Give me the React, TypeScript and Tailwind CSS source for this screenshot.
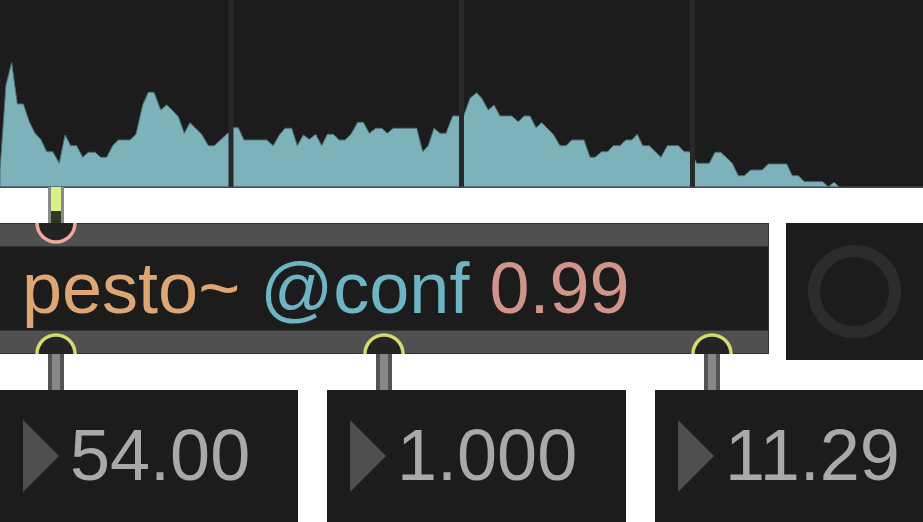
import React from "react";

const PTS: [number, number][] = [
  [0, 170], [6, 85], [11.7, 62.7], [17.3, 104], [23.3, 104], [29.3, 121.7], [35, 133.3], [40.7, 139.3],
  [46.7, 151.7], [52.7, 151.7], [59.3, 163.3], [65, 135], [70.7, 145.7], [76.7, 145.7], [82.7, 157.3],
  [88.3, 152.3], [95, 152.3], [100.7, 157.3], [106.7, 157.3], [112.7, 145.7], [118.3, 140], [130, 140],
  [136, 134.3], [142.7, 105], [148.3, 92.3], [154, 92.3], [160.7, 110], [166.7, 105], [172.7, 110.7],
  [178.3, 116.7], [184.3, 133.3], [190, 122.7], [201.7, 134.3], [208.3, 145.7], [214.3, 145.7],
  [227.7, 133.3], [233.3, 127.7], [238.3, 127.7], [244, 140], [266.7, 140], [273.3, 145.7], [279.3, 135],
  [285, 128.3], [291.7, 128.3], [297.3, 145.7], [303.3, 135], [309.3, 139.3], [315.7, 134.3],
  [321.7, 145.7], [327.3, 134.3], [333.3, 134.3], [339.3, 140], [345, 140], [351, 134.3], [357.7, 122.3],
  [363.3, 122.3], [369.3, 133.3], [375.7, 128.3], [381.7, 128.3], [387.3, 133.3], [393.3, 128.3],
  [416.7, 128.3], [422.7, 151.7], [428.3, 145.7], [434, 128.3], [440, 133.3], [446, 133.3], [452.7, 116],
  [458.3, 116], [464, 115], [470, 98.3], [476.7, 92.7], [481.7, 98.3], [488.3, 110], [494, 105],
  [500, 116], [511.7, 116], [518.3, 121.7], [524.3, 116], [530, 116], [536, 127.7], [541.7, 122.7],
  [553.3, 134.3], [560, 145.7], [566, 145.7], [571.7, 140], [584, 140], [590, 157.3], [595, 157.3],
  [601.7, 151.7], [607.7, 151.7], [613.3, 145.7], [620, 145.7], [625.7, 140], [631.7, 140],
  [637.3, 134.3], [642.7, 145.7], [649.3, 145.7], [661, 157.3], [667.3, 145.7], [678.3, 145.7],
  [684.3, 151.7], [689.3, 151.7], [695, 160], [696.7, 163.3], [709.3, 163.3], [715, 152.3],
  [720.7, 152.3], [726.7, 157.7], [732.3, 163.3], [738.3, 175.7], [744.3, 175.7], [750.7, 170],
  [762.3, 170], [768.3, 164], [786.7, 164], [792.3, 175.7], [798.3, 175.7], [804.3, 181.7],
  [822.7, 181.7], [828.3, 186.7], [834, 182.3], [839.3, 187],
];

function Spectrum() {
  const poly = "0,187 " + PTS.map(([x, y]) => `${x},${y}`).join(" ") + " 839.3,187";
  return (
    <div className="h-[188px] w-full shrink-0 bg-[#1c1c1c]">
      <svg width="923" height="188" viewBox="0 0 923 188" className="block">
        <rect x="0" y="0" width="923" height="188" fill="#1c1c1c" />
        <polygon points={poly} fill="#7db2bb" stroke="#4f7278" strokeWidth="1" strokeLinejoin="round" />
        <rect x="228.5" y="0" width="5" height="187" fill="#282828" />
        <rect x="459" y="0" width="5" height="187" fill="#282828" />
        <rect x="690" y="0" width="5" height="187" fill="#282828" />
        <rect x="0" y="186.5" width="923" height="1.5" fill="#3e5357" />
      </svg>
    </div>
  );
}

function ObjectBox() {
  return (
    <div className="relative w-[769px] h-[131px] shrink-0 flex flex-col border-r border-[#333333]">
      <div className="h-px bg-[#333333]" />
      <div className="h-[22px] bg-[#505050]" />
      <div className="h-px bg-[#333333]" />
      <div className="h-[83px] bg-[#1c1c1c] pl-[22px] pt-[5px] text-[72px] leading-[72px] whitespace-nowrap">
        <span className="text-[#dea673]">pesto~</span>{" "}
        <span className="text-[#6db5c5]">@conf</span>{" "}
        <span className="text-[#cf958a]">0.99</span>
      </div>
      <div className="h-px bg-[#333333]" />
      <div className="h-[22px] bg-[#505050]" />
      <div className="h-px bg-[#333333]" />
      <svg width="768" height="131" viewBox="0 0 768 131" className="absolute left-0 top-0 pointer-events-none">
        <circle cx="56" cy="0" r="19" fill="#232323" stroke="#f2a898" strokeWidth="3.5" />
        <circle cx="56" cy="131" r="19" fill="#232323" stroke="#d4da6c" strokeWidth="3.5" />
        <circle cx="384" cy="131" r="19" fill="#232323" stroke="#d4da6c" strokeWidth="3.5" />
        <circle cx="712" cy="131" r="19" fill="#232323" stroke="#d4da6c" strokeWidth="3.5" />
      </svg>
    </div>
  );
}

function Toggle() {
  return (
    <div className="ml-[17px] w-[137px] h-[137px] shrink-0 bg-[#1c1c1c] flex items-center justify-center">
      <div className="w-[93px] h-[93px] rounded-full border-[12px] border-[#2c2c2c]" />
    </div>
  );
}

function NumBox({ value, width }: { value: string; width: string }) {
  return (
    <div className={`${width} h-[132px] shrink-0 bg-[#1c1c1c] flex items-center pl-[23px]`}>
      <svg width="36" height="72" viewBox="0 0 36 72" className="shrink-0">
        <polygon points="0,0 36,36 0,72" fill="#4f4f4f" />
      </svg>
      <span className="ml-[11px] mb-[2px] text-[72px] leading-[72px] text-[#a9a9a9] whitespace-nowrap">{value}</span>
    </div>
  );
}

function OutCable({ left }: { left: string }) {
  return (
    <div className={`absolute ${left} top-0 h-full w-[16px] border-x-[4px] border-[#525252] bg-[#878787]`} />
  );
}

export default function App() {
  return (
    <div className="w-[923px] h-[522px] bg-white overflow-hidden flex flex-col font-['Liberation_Sans',Arial,sans-serif]">
      <Spectrum />
      <div className="relative h-[35px] shrink-0">
        <div className="absolute left-[48px] -top-px w-[16px] h-[36px] border-x-[3px] border-[#8a8a8a] flex flex-col">
          <div className="h-[24px] bg-[#d8f088]" />
          <div className="flex-1 bg-[#333822]" />
        </div>
      </div>
      <div className="flex h-[131px] items-start shrink-0">
        <ObjectBox />
        <Toggle />
      </div>
      <div className="relative h-[36px] shrink-0">
        <OutCable left="left-[48px]" />
        <OutCable left="left-[376px]" />
        <OutCable left="left-[704px]" />
      </div>
      <div className="flex gap-[29px] h-[132px] shrink-0">
        <NumBox value="54.00" width="w-[298px]" />
        <NumBox value="1.000" width="w-[299px]" />
        <NumBox value="11.29" width="w-[268px]" />
      </div>
    </div>
  );
}
